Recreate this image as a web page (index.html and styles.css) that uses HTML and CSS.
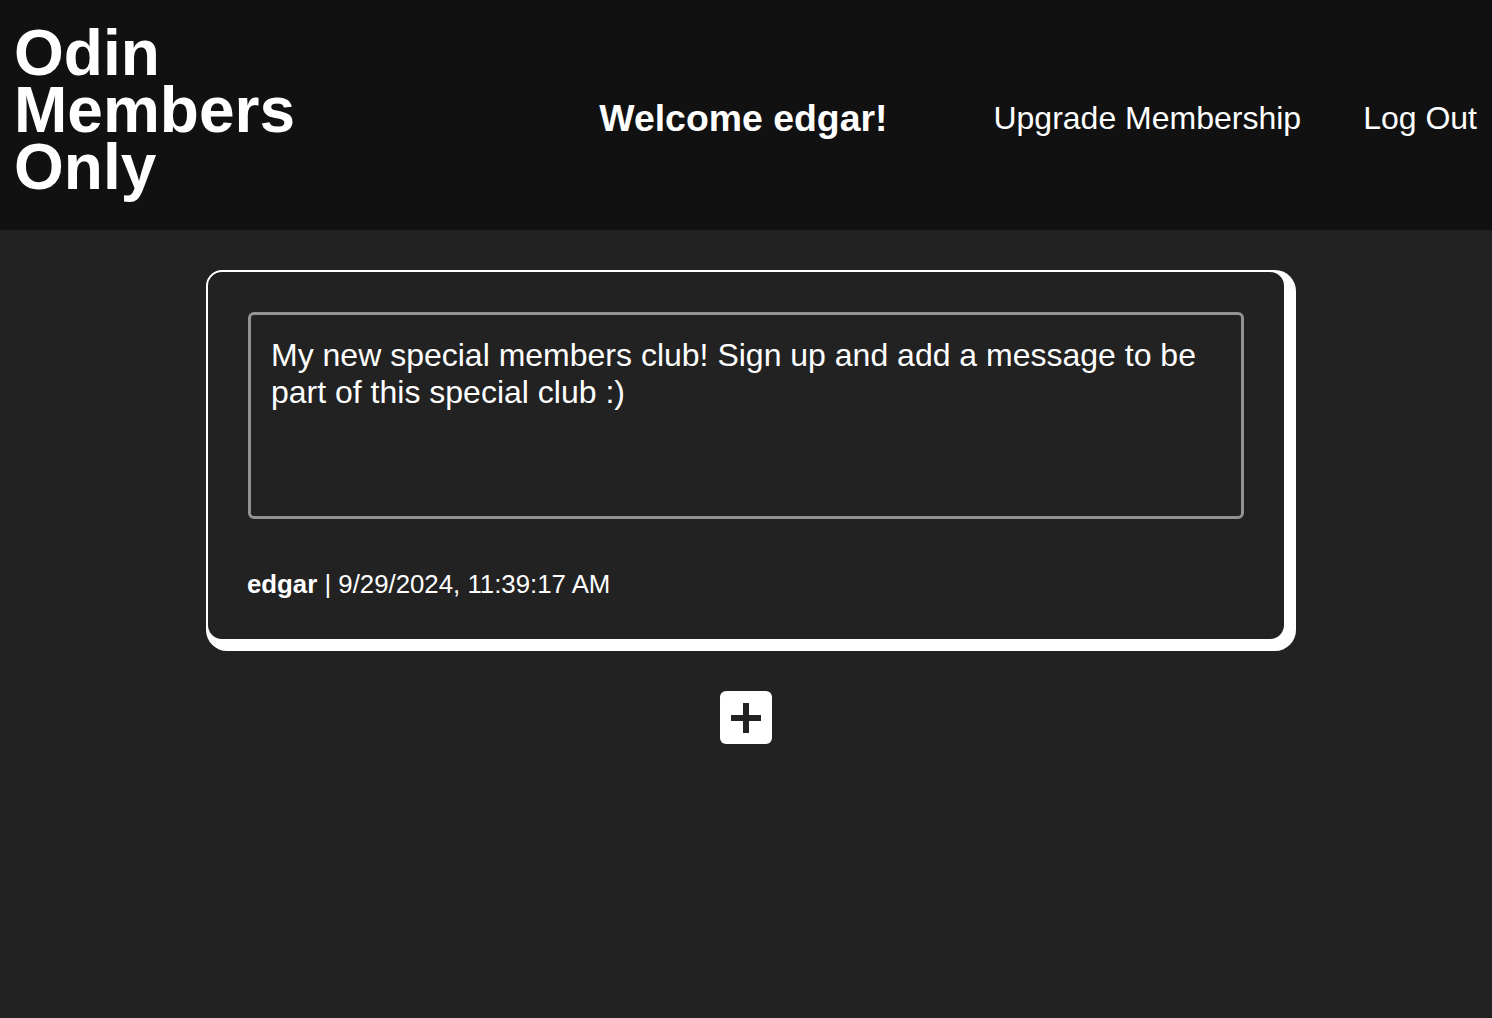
FILE: index.html
```html
<!DOCTYPE html>
<html lang="en">
<head>
<meta charset="utf-8">
<title>Odin Members Only</title>
<link rel="stylesheet" href="styles.css">
</head>
<body>
<header class="site-header">
  <h1 class="logo">Odin<br>Members<br>Only</h1>
  <div class="header-right">
    <h2 class="welcome">Welcome edgar!</h2>
    <nav class="nav">
      <a class="nav-link" href="#">Upgrade Membership</a>
      <a class="nav-link" href="#">Log Out</a>
    </nav>
  </div>
</header>
<main class="main">
  <article class="card">
    <div class="message">My new special members club! Sign up and add a message to be part of this special club :)</div>
    <p class="meta"><strong>edgar</strong> | 9/29/2024, 11:39:17 AM</p>
  </article>
  <button class="add-btn" aria-label="Add message">
    <svg width="30" height="30" viewBox="0 0 30 30"><rect x="12" y="0" width="6" height="30" fill="#222"/><rect x="0" y="12" width="30" height="6" fill="#222"/></svg>
  </button>
</main>
</body>
</html>
```

FILE: styles.css
```css
html, body {
  margin: 0;
  padding: 0;
}
body {
  background: #222222;
  color: #ffffff;
  font-family: "Liberation Sans", Arial, Helvetica, sans-serif;
  min-height: 1018px;
}
.site-header {
  background: #111111;
  height: 230px;
  box-sizing: border-box;
  padding: 0 15px 0 14px;
  display: flex;
  align-items: center;
  justify-content: space-between;
}
.logo {
  margin: 0 0 10px 0;
  font-size: 64px;
  line-height: 57px;
  font-weight: 700;
}
.header-right {
  display: flex;
  align-items: center;
  gap: 106px;
  padding-top: 6px;
}
.welcome {
  margin: 0;
  font-size: 37.4px;
  font-weight: 700;
}
.nav {
  display: flex;
  gap: 62px;
}
.nav-link {
  color: #ffffff;
  text-decoration: none;
  font-size: 32px;
}
.main {
  padding-top: 40px;
  display: flex;
  flex-direction: column;
  align-items: center;
}
.card {
  width: 1080px;
  box-sizing: border-box;
  border: 2px solid #ffffff;
  border-radius: 16px;
  padding: 40px;
  box-shadow: 5px 5px 0 5px #ffffff;
  background: #222222;
  display: flex;
  flex-direction: column;
  gap: 51px;
}
.message {
  height: 207px;
  box-sizing: border-box;
  border: 3px solid #939393;
  border-radius: 6px;
  padding: 22px 20px;
  font-size: 32px;
  line-height: 37px;
}
.meta {
  margin: 0 0 0 -1px;
  font-size: 25.8px;
  line-height: 29px;
}
.add-btn {
  margin-top: 50px;
  width: 52px;
  height: 53px;
  border: none;
  border-radius: 6px;
  background: #ffffff;
  display: flex;
  align-items: center;
  justify-content: center;
  padding: 0;
  cursor: pointer;
}
```
